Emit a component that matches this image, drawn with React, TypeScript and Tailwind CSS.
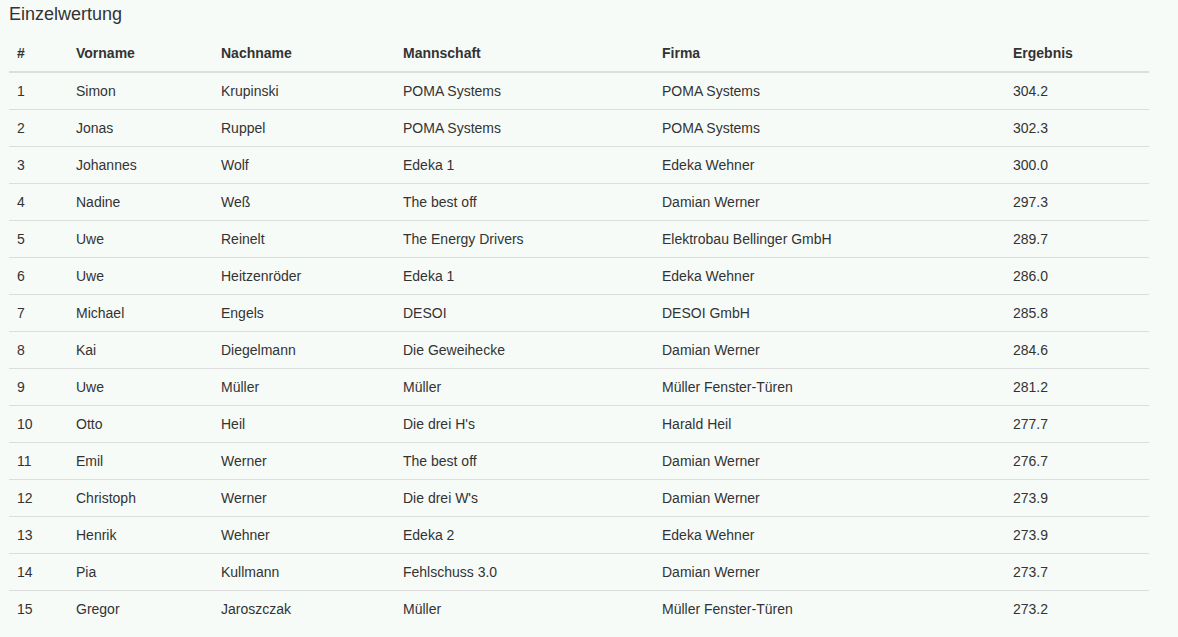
import React from "react";

const rows: [string, string, string, string, string, string][] = [
  ["1", "Simon", "Krupinski", "POMA Systems", "POMA Systems", "304.2"],
  ["2", "Jonas", "Ruppel", "POMA Systems", "POMA Systems", "302.3"],
  ["3", "Johannes", "Wolf", "Edeka 1", "Edeka Wehner", "300.0"],
  ["4", "Nadine", "Weß", "The best off", "Damian Werner", "297.3"],
  ["5", "Uwe", "Reinelt", "The Energy Drivers", "Elektrobau Bellinger GmbH", "289.7"],
  ["6", "Uwe", "Heitzenröder", "Edeka 1", "Edeka Wehner", "286.0"],
  ["7", "Michael", "Engels", "DESOI", "DESOI GmbH", "285.8"],
  ["8", "Kai", "Diegelmann", "Die Geweihecke", "Damian Werner", "284.6"],
  ["9", "Uwe", "Müller", "Müller", "Müller Fenster-Türen", "281.2"],
  ["10", "Otto", "Heil", "Die drei H's", "Harald Heil", "277.7"],
  ["11", "Emil", "Werner", "The best off", "Damian Werner", "276.7"],
  ["12", "Christoph", "Werner", "Die drei W's", "Damian Werner", "273.9"],
  ["13", "Henrik", "Wehner", "Edeka 2", "Edeka Wehner", "273.9"],
  ["14", "Pia", "Kullmann", "Fehlschuss 3.0", "Damian Werner", "273.7"],
  ["15", "Gregor", "Jaroszczak", "Müller", "Müller Fenster-Türen", "273.2"],
];

const widths = ["w-[59px]", "w-[145px]", "w-[182px]", "w-[259px]", "w-[351px]", "w-[144px]"];
const heads = ["#", "Vorname", "Nachname", "Mannschaft", "Firma", "Ergebnis"];

export default function App() {
  return (
    <div
      className="min-h-[637px] w-full bg-[#f7fbf8] text-[#333333] text-[14px] leading-[20px]"
      style={{ fontFamily: '"Liberation Sans", Arial, Helvetica, sans-serif' }}
    >
      <div className="pl-[9px] pr-[29px]">
        <h4 className="pt-[4px] text-[18px] leading-[20px] font-normal mb-[11px]">Einzelwertung</h4>
        <table className="w-[1140px] border-collapse table-fixed">
          <colgroup>
            {widths.map((w, i) => (
              <col key={i} className={w} />
            ))}
          </colgroup>
          <thead>
            <tr>
              {heads.map((h) => (
                <th
                  key={h}
                  className="text-left font-bold px-[8px] pt-[8px] pb-[8px] border-b-2 border-[#dddddd]"
                >
                  {h}
                </th>
              ))}
            </tr>
          </thead>
          <tbody>
            {rows.map((r, i) => (
              <tr key={i}>
                {r.map((c, j) => (
                  <td
                    key={j}
                    className={`px-[8px] py-[8px] ${i === 0 ? "" : "border-t border-[#dddddd]"}`}
                  >
                    {c}
                  </td>
                ))}
              </tr>
            ))}
          </tbody>
        </table>
      </div>
    </div>
  );
}
